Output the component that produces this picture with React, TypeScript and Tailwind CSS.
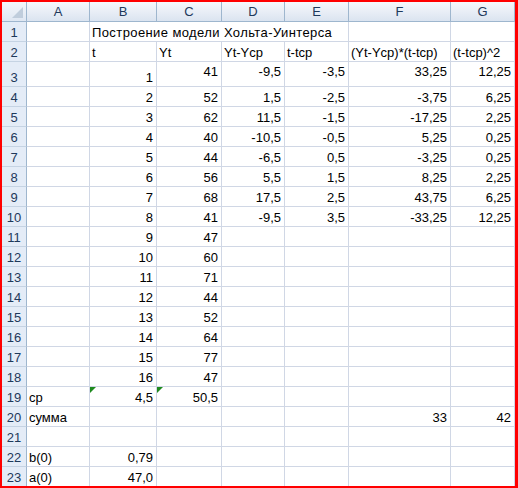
import React from "react";

type C = { v?: string; a?: "l" | "r"; top?: boolean; tri?: boolean; wide?: boolean };

const cols = ["A", "B", "C", "D", "E", "F", "G"];

const L = (v: string): C => ({ v, a: "l" });
const R = (v: string, top = false): C => ({ v, a: "r", top });
const E: C = {};

const dataRows: { n: number; h: number; cells: C[]; span?: boolean }[] = [];

dataRows.push({ n: 1, h: 20, cells: [E, { ...L("Построение модели Хольта-Уинтерса"), wide: true }, E, E, E, E, E], span: true });
dataRows.push({ n: 2, h: 20, cells: [E, L("t"), L("Yt"), L("Yt-Ycp"), L("t-tcp"), L("(Yt-Ycp)*(t-tcp)"), L("(t-tcp)^2")] });

const yt = ["41", "52", "62", "40", "44", "56", "68", "41", "47", "60", "71", "44", "52", "64", "77", "47"];
const d = ["-9,5", "1,5", "11,5", "-10,5", "-6,5", "5,5", "17,5", "-9,5"];
const e = ["-3,5", "-2,5", "-1,5", "-0,5", "0,5", "1,5", "2,5", "3,5"];
const f = ["33,25", "-3,75", "-17,25", "5,25", "-3,25", "8,25", "43,75", "-33,25"];
const g = ["12,25", "6,25", "2,25", "0,25", "0,25", "2,25", "6,25", "12,25"];

for (let i = 0; i < 16; i++) {
  const top = i === 0;
  dataRows.push({
    n: i + 3,
    h: i === 0 ? 25 : 20,
    cells: [
      E,
      R(String(i + 1)),
      R(yt[i], top),
      i < 8 ? R(d[i], top) : E,
      i < 8 ? R(e[i], top) : E,
      i < 8 ? R(f[i], top) : E,
      i < 8 ? R(g[i], top) : E,
    ],
  });
}
dataRows.push({ n: 19, h: 20, cells: [L("ср"), { ...R("4,5"), tri: true }, { ...R("50,5"), tri: true }, E, E, E, E] });
dataRows.push({ n: 20, h: 20, cells: [L("сумма"), E, E, E, E, R("33"), R("42")] });
dataRows.push({ n: 21, h: 20, cells: [E, E, E, E, E, E, E] });
dataRows.push({ n: 22, h: 20, cells: [L("b(0)"), R("0,79"), E, E, E, E, E] });
dataRows.push({ n: 23, h: 20, cells: [L("a(0)"), R("47,0"), E, E, E, E, E] });

function Cell({ c, span }: { c: C; span?: boolean }) {
  return (
    <div
      className={
        "relative flex items-end whitespace-nowrap border-r border-b border-[#d0d7e5] text-[13px] leading-[15px] text-black " +
        (c.a === "r" ? "justify-end pr-[3px] " : "justify-start pl-[2px] ") +
        (c.top ? "pb-[7px] " : "pb-[1px] ") +
        (c.wide ? "tracking-[0.4px] " : "") +
        (span ? "col-span-4" : "")
      }
    >
      {c.tri && (
        <div className="absolute left-0 top-0 h-0 w-0 border-t-[6px] border-r-[6px] border-t-[#1e8a1e] border-r-transparent" />
      )}
      {c.v}
    </div>
  );
}

export default function App() {
  return (
    <div className="h-[488px] w-[518px] overflow-hidden border-t-2 border-l-2 border-b-2 border-r-[3px] border-[#ff0000] bg-white font-['Liberation_Sans',Arial,sans-serif]">
      <div className="grid grid-cols-[25px_63px_67px_65px_63px_64px_102px_64px]">
        <div className="relative h-[20px] border-r border-b border-[#9eb6ce] bg-gradient-to-b from-[#f4f7fb] to-[#dfe7f2]">
          <div className="absolute bottom-[3px] right-[3px] h-0 w-0 border-b-[11px] border-l-[11px] border-b-[#c0cddc] border-l-transparent" />
        </div>
        {cols.map((c) => (
          <div
            key={c}
            className="flex h-[20px] items-end justify-center border-r border-b border-[#9eb6ce] bg-gradient-to-b from-[#f6f8fc] via-[#e9eef6] to-[#dbe4f0] pb-[2px] text-[13px] leading-[14px] text-[#1e395b]"
          >
            {c}
          </div>
        ))}
        {dataRows.map((r) => (
          <React.Fragment key={r.n}>
            <div
              className="flex items-end justify-center border-r border-b border-r-[#9eb6ce] border-b-[#c5d3e3] bg-[#e4ecf7] pb-[1px] text-[13px] leading-[15px] text-[#1e395b]"
              style={{ height: r.h }}
            >
              {r.n}
            </div>
            {r.span ? (
              <>
                <Cell c={r.cells[0]} />
                <Cell c={r.cells[1]} span />
                <Cell c={r.cells[5]} />
                <Cell c={r.cells[6]} />
              </>
            ) : (
              r.cells.map((c, i) => <Cell key={i} c={c} />)
            )}
          </React.Fragment>
        ))}
      </div>
    </div>
  );
}
